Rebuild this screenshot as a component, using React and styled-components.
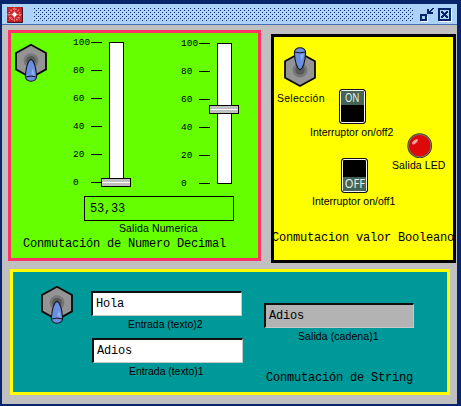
import React from 'react';
import styled, { createGlobalStyle } from 'styled-components';

const GlobalStyle = createGlobalStyle`
  * { box-sizing: border-box; }
  html, body { margin: 0; padding: 0; }
  body { background: #08246b; overflow: hidden; }
`;

const Desktop = styled.div`
  width: 461px;
  height: 406px;
  padding: 4px 4px 2px 2px;
  background: #08246b;
`;

const Frame = styled.div`
  width: 455px;
  height: 400px;
  background: #c0c0c0;
`;

const TitleBar = styled.header`
  display: flex;
  align-items: flex-start;
  height: 21px;
  padding: 3px 5px 0;
  background: #acd2f8;
  border-bottom: 1px solid #4a6eb5;
`;

const IconSvg = styled.svg`
  display: block;
  flex: none;
  width: 16px;
  height: 16px;
`;

const Bumps = styled.svg`
  display: block;
  flex: none;
  width: 380px;
  height: 14px;
  margin: 0 7px 0 10px;
`;

const FrameButton = styled.svg`
  display: block;
  flex: none;
  width: 14px;
  height: 14px;
  margin-top: 1px;

  & + & {
    margin-left: 4px;
  }
`;

const Body = styled.main`
  padding: 5px 0 0 6px;
`;

const TopRow = styled.div`
  display: flex;
  align-items: flex-start;
  height: 239px;
`;

const Panel = styled.section`
  flex: none;
  border: 3px solid ${(p) => p.$edge};
  background: ${(p) => p.$fill};
`;

const DecimalPanel = styled(Panel)`
  width: 253px;
  height: 231px;
  padding-top: 4px;
`;

const BooleanPanel = styled(Panel)`
  width: 185px;
  height: 229px;
  margin: 4px 0 0 10px;
`;

const StringPanel = styled(Panel)`
  display: flex;
  align-items: flex-start;
  width: 440px;
  height: 126px;
  margin-left: 2px;
  padding: 13px 0 0 27px;
`;

const Caption = styled.div`
  width: max-content;
  height: 12px;
  margin: ${(p) => p.$m || '0'};
  font: 10.5px/12px "Liberation Sans", Arial, sans-serif;
  letter-spacing: ${(p) => p.$track || 0}px;
  white-space: nowrap;
  color: #000;
`;

const PanelTitle = styled.div`
  height: 14px;
  margin: ${(p) => p.$m || '0'};
  font: 12px/14px "Liberation Mono", "Courier New", monospace;
  letter-spacing: -0.2px;
  white-space: nowrap;
  color: #000;
`;

const Field = styled.div`
  display: flex;
  align-items: center;
  width: ${(p) => p.$w || 151}px;
  height: 25px;
  margin: ${(p) => p.$m || '0'};
  padding-left: 3px;
  font: 12px/14px "Liberation Mono", "Courier New", monospace;
  letter-spacing: -0.2px;
  color: #000;
  background: ${(p) => p.$fill || '#fff'};
  border-style: solid;
  border-width: 2px 1px 1px 2px;
  border-color: #101010 #c8c8c8 #c8c8c8 #101010;
`;

const FlatField = styled(Field)`
  padding-left: 5px;
  border: 1px solid #000;
`;

const SliderRow = styled.div`
  display: flex;
  align-items: flex-start;
`;

const SliderBox = styled.div`
  display: flex;
  margin: ${(p) => p.$m};
`;

const Scale = styled.div`
  display: flex;
  flex-direction: column;
  justify-content: space-between;
  width: 29px;
  height: 151px;
  margin-right: 7px;
`;

const Mark = styled.div`
  display: flex;
  align-items: center;
  justify-content: space-between;
  height: 11px;
  font: 9.5px/11px "Liberation Mono", "Courier New", monospace;
  color: #000;

  &::after {
    content: '';
    width: 11px;
    height: 1px;
    background: #000;
  }
`;

const Track = styled.div`
  position: relative;
  width: 15px;
  height: 141px;
  margin-top: 5px;
  border: 1px solid #000;
  background: #fff;
`;

const Thumb = styled.div`
  position: absolute;
  left: -9px;
  width: 30px;
  height: 9px;
  border: 1px solid #000;
  background: linear-gradient(#c0c0c0 3px, #fff 3px, #fff 4px, #c0c0c0 4px);
`;

const ToggleSvg = styled.svg`
  display: block;
  flex: none;
  margin: ${(p) => p.$m || '0'};
`;

const RockerBox = styled.div`
  display: flex;
  flex-direction: column;
  justify-content: ${(p) => (p.$on ? 'flex-start' : 'flex-end')};
  width: 27px;
  height: 35px;
  margin: ${(p) => p.$m};
  border: 1px solid #111;
  border-radius: 3px;
  background: #000;
  box-shadow: inset 0 0 0 1px #f4f4f4;
`;

const RockerFace = styled.div`
  display: flex;
  justify-content: center;
  height: 14px;
  margin: 1px;
  font: 12px/14px "Noto Sans", sans-serif;
  color: #e8efe9;
  background: #446455;
`;

const RockerText = styled.span`
  transform: scaleX(${(p) => p.$stretch});
`;

const BooleanTop = styled.div`
  display: flex;
  align-items: flex-start;
  height: 87px;
`;

const SelectorColumn = styled.div`
  width: 65px;
  padding: 9px 0 0 3px;
`;

const SwitchRow = styled.div`
  display: flex;
  align-items: flex-start;
  height: 103px;
`;

const SwitchColumn = styled.div`
  width: 118px;
  flex: none;
`;

const LedSvg = styled.svg`
  display: block;
  margin: 9px 0 0 15px;
`;

const Inputs = styled.div`
  width: 152px;
  margin: 6px 0 0 16px;
`;

const Outputs = styled.div`
  margin: 18px 0 0 22px;
`;

function AppIcon() {
  return (
    <IconSvg viewBox="0 0 16 16">
      <rect width="16" height="16" rx="1" fill="#43151c" />
      <rect width="15" height="15" rx="1" fill="#c41d25" />
      <circle cx="7.5" cy="7.5" r="5.5" fill="none" stroke="#ef9a93" strokeWidth="1.5" strokeDasharray="1.4 1.2" />
      <path d="M1.5 1.5l12 12M13.5 1.5l-12 12M7.5 0v15M0 7.5h15" stroke="#e8665f" strokeWidth=".8" />
      <circle cx="7.5" cy="7.5" r="3.4" fill="#d8262b" />
      <path d="M7.5 4.5v6M4.5 7.5h6" stroke="#ffc9c2" strokeWidth="1.4" />
      <circle cx="7.5" cy="7.5" r="1.9" fill="#fff" />
    </IconSvg>
  );
}

function Toggle({ up = false, m }) {
  return (
    <ToggleSvg $m={m} width="34" height="42" viewBox="0 0 34 42">
      <g transform={up ? 'matrix(1 0 0 -1 0 42)' : undefined}>
        <g transform={up ? undefined : 'translate(0 .7)'}>
          <path d="M17 2 L32 10.3 V26.7 L17 35 L2 26.7 V10.3Z" fill="#949494" stroke="#080808" strokeWidth="1.8" />
          <circle cx="17" cy="18" r="7.4" fill="#777" />
          <circle cx="17" cy="18" r="4.8" fill="#595959" />
        </g>
        <g transform={up ? 'translate(0 1)' : undefined}>
          <path d="M17 17.2 C14.2 18.6 12 25 11.4 34 C10.6 41 23.4 41 22.6 34 C22 25 19.8 18.6 17 17.2Z" fill="#6b8fe0" stroke="#15151c" strokeWidth="1.1" />
          <path d="M18.5 26 L20.9 33 L17.4 32.2Z" fill="#8fb2f4" />
          <path d="M11.6 35 Q17 33.2 22.4 35" fill="none" stroke="#15151c" strokeWidth="1" />
        </g>
      </g>
    </ToggleSvg>
  );
}

function Slider({ value, m }) {
  const thumbTop = Math.ceil((1 - value / 100) * 140) - 5;
  return (
    <SliderBox $m={m}>
      <Scale>
        {[100, 80, 60, 40, 20, 0].map((n) => (
          <Mark key={n}>{n}</Mark>
        ))}
      </Scale>
      <Track>
        <Thumb style={{ top: thumbTop }} />
      </Track>
    </SliderBox>
  );
}

function Rocker({ on = false, m }) {
  return (
    <RockerBox $on={on} $m={m}>
      <RockerFace>
        <RockerText $stretch={on ? 0.78 : 0.93}>{on ? 'ON' : 'OFF'}</RockerText>
      </RockerFace>
    </RockerBox>
  );
}

function Led() {
  return (
    <LedSvg width="26" height="26" viewBox="0 0 26 26">
      <circle cx="12.7" cy="12.7" r="11.5" fill="#df0808" stroke="#473b32" strokeWidth="1.8" />
      <circle cx="12.7" cy="12.7" r="11.2" fill="none" stroke="#a67c68" strokeWidth=".8" />
      <ellipse cx="8" cy="8.7" rx="3.6" ry="1.6" transform="rotate(-42 8 8.7)" fill="#f4a29b" />
    </LedSvg>
  );
}

export default function App() {
  return (
    <>
      <GlobalStyle />
      <Desktop>
        <Frame>
          <TitleBar>
            <AppIcon />
            <Bumps>
              <defs>
                <pattern id="bumps" width="4" height="4" patternUnits="userSpaceOnUse">
                  <path d="M0 0h1v1h-1zM2 2h1v1h-1z" fill="#c4e0fc" />
                  <path d="M1 1h1v1h-1zM3 3h1v1h-1z" fill="#08246b" />
                </pattern>
              </defs>
              <rect width="380" height="14" fill="url(#bumps)" />
            </Bumps>
            <FrameButton viewBox="0 0 14 14" shapeRendering="crispEdges">
              <path d="M1 8h7v6h-7z" fill="#fff" />
              <rect x="1" y="7" width="5" height="5" fill="#acd2f8" stroke="#08246b" strokeWidth="2" />
              <path d="M7 1h2v2h1v-1h1v-1h1v-1h2v1h-1v1h-1v1h-1v1h2v2h-6z" fill="#08246b" />
            </FrameButton>
            <FrameButton viewBox="0 0 14 14" shapeRendering="crispEdges">
              <rect x="1" y="1" width="13" height="13" fill="#fff" />
              <rect width="13" height="13" fill="#08246b" />
              <rect x="2" y="2" width="9" height="9" fill="#acd2f8" />
              <path d="M3 3h2v1h1v1h1v-1h1v-1h2v2h-1v1h-1v1h1v1h1v2h-2v-1h-1v-1h-1v1h-1v1h-2v-2h1v-1h1v-1h-1v-1h-1z" fill="#08246b" />
            </FrameButton>
          </TitleBar>
          <Body>
            <TopRow>
              <DecimalPanel $edge="#ff3366" $fill="#66ff00">
                <SliderRow>
                  <Toggle m="5px 0 0 3px" />
                  <Slider value={0} m="0 0 0 25px" />
                  <Slider value={53.33} m="1px 0 0 57px" />
                </SliderRow>
                <FlatField $w={150} $fill="transparent" $m="7px 0 0 73px">53,33</FlatField>
                <Caption $track={0.12} $m="1px 0 0 108px">Salida Numerica</Caption>
                <PanelTitle $m="3px 0 0 12px">Conmutación de Numero Decimal</PanelTitle>
              </DecimalPanel>
              <BooleanPanel $edge="#000" $fill="#ffff00">
                <BooleanTop>
                  <SelectorColumn>
                    <Toggle up m="0 0 0 6px" />
                    <Caption $track={0.25} $m="4px 0 0 0">Selección</Caption>
                  </SelectorColumn>
                  <Rocker on m="52px 0 0 0" />
                </BooleanTop>
                <SwitchRow>
                  <SwitchColumn>
                    <Caption $m="2px 0 0 36px">Interruptor on/off2</Caption>
                    <Rocker m="20px 0 0 67px" />
                    <Caption $m="2px 0 0 38px">Interruptor on/off1</Caption>
                  </SwitchColumn>
                  <div>
                    <Led />
                    <Caption $track={0.1} $m="0">Salida LED</Caption>
                  </div>
                </SwitchRow>
                <PanelTitle $m="4px 0 0 -2px">Conmutacion valor Booleano</PanelTitle>
              </BooleanPanel>
            </TopRow>
            <StringPanel $edge="#ffff00" $fill="#009999">
              <Toggle m="-1px 0 0" />
              <Inputs>
                <Field $m="0 0 0 1px">Hola</Field>
                <Caption $track={-0.05} $m="2px 0 0 38px">Entrada (texto)2</Caption>
                <Field $m="8px 0 0 2px">Adios</Field>
                <Caption $track={-0.05} $m="2px 0 0 39px">Entrada (texto)1</Caption>
              </Inputs>
              <Outputs>
                <Field $w={150} $fill="#b3b3b3">Adios</Field>
                <Caption $track={0.08} $m="2px 0 0 34px">Salida (cadena)1</Caption>
                <PanelTitle $m="29px 0 0 2px">Conmutación de String</PanelTitle>
              </Outputs>
            </StringPanel>
          </Body>
        </Frame>
      </Desktop>
    </>
  );
}
